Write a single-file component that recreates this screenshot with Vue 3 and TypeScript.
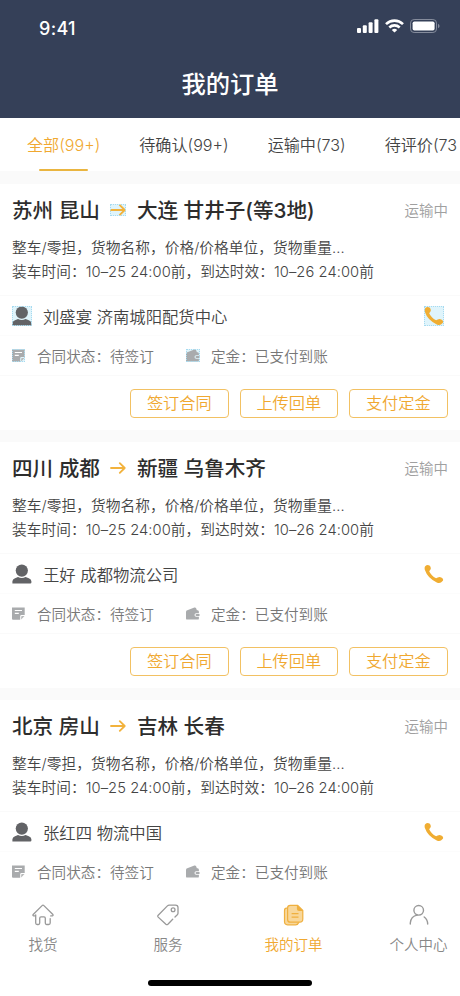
<script setup lang="ts">
interface Order {
  from: string
  to: string
  contact: string
  marked?: boolean
  actions: boolean
}

const tabs: string[] = ['全部(99+)', '待确认(99+)', '运输中(73)', '待评价(73']
const actions: string[] = ['签订合同', '上传回单', '支付定金']
const orders: Order[] = [
  { from: '苏州 昆山', to: '大连 甘井子(等3地)', contact: '刘盛宴 济南城阳配货中心', marked: true, actions: true },
  { from: '四川 成都', to: '新疆 乌鲁木齐', contact: '王好 成都物流公司', actions: true },
  { from: '北京 房山', to: '吉林 长春', contact: '张红四 物流中国', actions: false },
]
</script>

<template>
  <div class="screen">
    <header class="header">
      <div class="status">
        <span class="time">9:41</span>
        <div class="signals">
          <svg width="22" height="14" viewBox="0 0 22 14" fill="#fff">
            <rect x="0" y="9" width="4" height="5" rx="1" />
            <rect x="5.8" y="6.3" width="4" height="7.7" rx="1" />
            <rect x="11.6" y="3.3" width="4" height="10.7" rx="1" />
            <rect x="17.4" y="0.3" width="4" height="13.7" rx="1" />
          </svg>
          <svg width="19" height="14" viewBox="0 0 19 14" fill="none" stroke="#fff" stroke-width="2.6">
            <path d="M1 5.1C5.8 .5 13.2 .5 18 5.1" />
            <path d="M4.3 8.5C7.3 5.7 11.7 5.7 14.7 8.5" />
            <path d="M6.8 10.9Q9.5 8.7 12.2 10.9L9.5 13.6Z" fill="#fff" stroke="none" />
          </svg>
          <svg width="30" height="14" viewBox="0 0 30 14">
            <rect x=".5" y=".5" width="26" height="13" rx="3.6" fill="none" stroke="#858c9c" />
            <rect x="2.6" y="2.4" width="22" height="9.2" rx="1.8" fill="#fff" />
            <path d="M28 4.8Q29.6 5.5 29.6 7T28 9.2Z" fill="#858c9c" />
          </svg>
        </div>
      </div>
      <h1 class="title">我的订单</h1>
    </header>

    <nav class="tabs">
      <div v-for="(tab, i) in tabs" :key="tab" class="tab" :class="{ active: i === 0 }">{{ tab }}</div>
    </nav>

    <main class="orders">
      <article v-for="order in orders" :key="order.from" class="card" :class="{ short: !order.actions }">
        <div class="route">
          <span class="city">{{ order.from }}</span>
          <svg class="arrow" :class="{ marked: order.marked }" width="16" height="12" viewBox="0 0 16 12" fill="none" stroke="#f2b23c" stroke-width="1.8" stroke-linecap="round" stroke-linejoin="round">
            <path d="M1 6H14.5M9.8 1.2L14.7 6L9.8 10.8" />
          </svg>
          <span class="city">{{ order.to }}</span>
          <span class="state">运输中</span>
        </div>
        <div class="detail">整车/零担，货物名称，价格/价格单位，货物重量...</div>
        <div class="detail schedule">装车时间：10–25 24:00前，到达时效：10–26 24:00前</div>
        <div class="contact">
          <svg class="person" :class="{ marked: order.marked }" width="20" height="20" viewBox="0 0 20 20" fill="#626366">
            <circle cx="9.8" cy="6.6" r="6.1" />
            <path d="M.4 19.4V17.2Q.5 15.1 3 14.2L6 13.1Q9.8 15 13.6 13.1L16.8 14.2Q19.4 15.1 19.4 17.2V18.4Q19.4 19.4 18.3 19.4Z" />
          </svg>
          <span>{{ order.contact }}</span>
          <svg class="phone" :class="{ marked: order.marked }" width="20" height="20" viewBox="0 0 20 20" fill="#f0ad32">
            <path d="M1.2 2.2Q3.2 .2 5.5 1.5Q7.8 3.9 6.1 5.9L5.2 7.3Q7.2 11.9 12.1 14.3L13.7 13.6Q15.5 12.3 17.3 13.5Q20.2 15.2 18.6 17.1Q16.4 20 12.8 18.5Q3.7 14.4 .9 6.1Q.2 3.4 1.2 2.2Z" />
          </svg>
        </div>
        <div class="facts">
          <svg :class="{ marked: order.marked }" width="13" height="13" viewBox="0 0 13 13">
            <path d="M0 .4H12.7V8H9.4Q8.2 8 8.2 9.2V12.7H1Q0 12.7 0 11.7Z" fill="#a9abad" />
            <path d="M2.8 3.5H10M2.8 6.4H6.8" stroke="#fff" stroke-width="1.2" />
            <path d="M9.2 12.5V10Q9.2 9.1 10 9.1H12.5Z" fill="#b7b9ba" />
          </svg>
          <span class="fact">合同状态：待签订</span>
          <svg :class="{ marked: order.marked }" width="14" height="13" viewBox="0 0 14 13">
            <path d="M0 5Q0 3.6 1.3 3.3L8.4 .5Q9.5 .1 10 1.1L10.9 3.3H11.7Q12.9 3.5 12.9 4.7V6.2H10.2Q8.5 6.2 8.5 8T10.2 9.8H12.9V11.4Q12.9 12.6 11.7 12.6H1.2Q0 12.6 0 11.4Z" fill="#a9abad" />
            <path d="M10.5 7H13.5V9H10.5Q9.5 9 9.5 8T10.5 7Z" fill="#a9abad" />
          </svg>
          <span>定金：已支付到账</span>
        </div>
        <div v-if="order.actions" class="actions">
          <button v-for="action in actions" :key="action" type="button">{{ action }}</button>
        </div>
      </article>
    </main>

    <footer class="footer">
      <div class="item home">
        <svg width="22" height="22" viewBox="0 0 22 22" fill="none" stroke="#999" stroke-width="1.3" stroke-linecap="round" stroke-linejoin="round">
          <path d="M3.7 10.8V19Q3.7 20.5 5.2 20.5H6.4Q7.7 20.5 7.7 19V14.2Q7.7 12.8 9 12.8H12Q13.3 12.8 13.3 14.2V19Q13.3 20.5 14.6 20.5H16.6Q18.2 20.5 18.2 19V14.6M3.7 11.9H1.6Q.4 11.4 1.2 10.5L10.1 1.6Q11 .7 11.9 1.6L20.9 10.5Q21.5 11.5 20.4 11.9H18.7" />
        </svg>
        <span>找货</span>
      </div>
      <div class="item">
        <svg width="22" height="22" viewBox="0 0 22 22" fill="none" stroke="#999" stroke-width="1.3" stroke-linecap="round" stroke-linejoin="round">
          <path d="M15.7 15.3L10.9 20.3Q9.9 21.1 8.9 20.3L1.2 13.1Q.3 12.1 1.2 11.2L10.4 1.9Q11.2 1.1 12.2 1.1H18.5Q21 1.1 21 3.6V9.2Q21 10.1 20.3 10.8L18 13" />
          <circle cx="16.1" cy="5.8" r="1.9" />
        </svg>
        <span>服务</span>
      </div>
      <div class="item active">
        <svg width="22" height="22" viewBox="0 0 22 22" fill="#f8d79a" stroke="#efb03f" stroke-width="1.2" stroke-linejoin="round">
          <path d="M4.6 4.2H3.5Q1.5 4.3 1.5 6.7V17.6Q1.5 20.8 4.5 20.8H12.6Q15 20.8 16 18.3" />
          <path d="M7.2 1.3H14.7L19.8 6.5V15Q19.8 18.2 16.7 18.2H7.2Q4.6 18.2 4.6 15.5V4Q4.6 1.3 7.2 1.3Z" />
          <path d="M14.5 1.5V4.8Q14.5 6.5 16.2 6.5H19.7" fill="#efb03f" />
          <path d="M8.6 9.7H15.5M8.6 13.2H15.5" />
        </svg>
        <span>我的订单</span>
      </div>
      <div class="item">
        <svg width="22" height="22" viewBox="0 0 22 22" fill="none" stroke="#999" stroke-width="1.4" stroke-linecap="round">
          <circle cx="10.7" cy="6.3" r="4.8" />
          <path d="M2.3 20V19Q2.8 12.3 9.3 11.1M16.2 13Q19.6 15.6 19.7 20" />
        </svg>
        <span>个人中心</span>
      </div>
      <div class="indicator"></div>
    </footer>
  </div>
</template>

<style>
body {
  margin: 0;
  overflow: hidden;
}
</style>

<style scoped>
.screen {
  display: flex;
  flex-direction: column;
  width: 460px;
  height: 996px;
  overflow: hidden;
  background: #fff;
  color: #444;
  font-family: Inter, "Noto Sans CJK SC", sans-serif;
  font-weight: 350;
  white-space: nowrap;
}
svg {
  display: block;
  flex: none;
}
.header {
  flex: none;
  height: 118px;
  background: #354058;
  color: #fff;
}
.status {
  display: flex;
  justify-content: space-between;
  box-sizing: border-box;
  height: 56px;
  padding: 18px 20px 0 39px;
}
.time {
  font-size: 18px;
  font-weight: 500;
  line-height: 21px;
  letter-spacing: 0.3px;
}
.signals {
  display: flex;
  gap: 6px;
  padding-top: 1px;
}
.title {
  margin: 10px 0 0;
  font-size: 24.3px;
  font-weight: 500;
  line-height: 36px;
  text-align: center;
}
.tabs {
  display: flex;
  flex: none;
  gap: 39px;
  height: 53px;
  padding-left: 27px;
  font-size: 16.1px;
  line-height: 54px;
}
.tab {
  display: flex;
  flex: none;
  flex-direction: column;
}
.tab.active {
  color: #f0a830;
}
.tab.active::after {
  content: "";
  width: 49px;
  height: 3px;
  margin: -3px 0 0 12px;
  border-radius: 2px;
  background: #eab540;
}
.orders {
  display: flex;
  flex: 1;
  flex-direction: column;
  gap: 12px;
  min-height: 0;
  padding-top: 13px;
  background: #fafafa;
}
.card {
  flex: none;
  height: 246px;
  background: #fff;
}
.card.short {
  height: 190px;
}
.route {
  display: flex;
  align-items: center;
  height: 52px;
  padding: 0 12px;
  font-size: 20.6px;
}
.city {
  position: relative;
  top: -1px;
  color: #2d2d2d;
  font-weight: 500;
}
.arrow {
  margin: 0 11px 0 10px;
}
.state {
  position: relative;
  top: -1px;
  margin-left: auto;
  color: #a0a0a0;
  font-size: 14.5px;
}
.detail {
  height: 24px;
  padding-left: 12px;
  font-size: 14.7px;
  line-height: 24px;
  letter-spacing: 0.06px;
}
.contact {
  display: flex;
  align-items: center;
  box-sizing: border-box;
  height: 41px;
  margin-top: 11px;
  padding: 0 16px 0 12px;
  border-top: 1px solid #fafafa;
  border-bottom: 1px solid #fcfcfc;
  font-size: 16.35px;
}
.person {
  margin-right: 11px;
}
.phone {
  margin-left: auto;
}
.marked {
  background: #dff4fb;
  outline: 1px dotted #a6daf0;
  outline-offset: -1px;
}
.facts {
  display: flex;
  align-items: center;
  height: 39px;
  padding-left: 12px;
  color: #777;
  font-size: 14.6px;
}
.facts span {
  margin-left: 12px;
}
.facts span:last-child {
  margin-left: 11px;
}
.fact {
  width: 149px;
}
.actions {
  display: flex;
  justify-content: flex-end;
  gap: 11px;
  padding: 13px 12.5px 0 12px;
  border-top: 1px solid #fafafa;
}
.actions button {
  box-sizing: border-box;
  width: 98.5px;
  height: 29px;
  padding: 0;
  border: 1px solid #f2c163;
  border-radius: 4px;
  background: #fff;
  color: #f0a830;
  font: inherit;
  font-size: 16.2px;
  line-height: 27px;
}
.footer {
  display: grid;
  flex: none;
  grid-template-columns: 86px 164px 87px 123px;
  grid-template-rows: 76px 1fr;
  height: 106px;
  color: #888;
  font-size: 14.5px;
  line-height: 22px;
}
.item {
  display: flex;
  flex-direction: column;
  align-items: center;
  gap: 8px;
  padding-top: 14px;
}
.item.active {
  color: #f0a830;
}
.item:nth-child(4) {
  padding-left: 40px;
}
.indicator {
  grid-column: 1 / -1;
  justify-self: center;
  width: 164px;
  height: 6px;
  margin-top: 14px;
  border-radius: 3px;
  background: #000;
}
</style>
